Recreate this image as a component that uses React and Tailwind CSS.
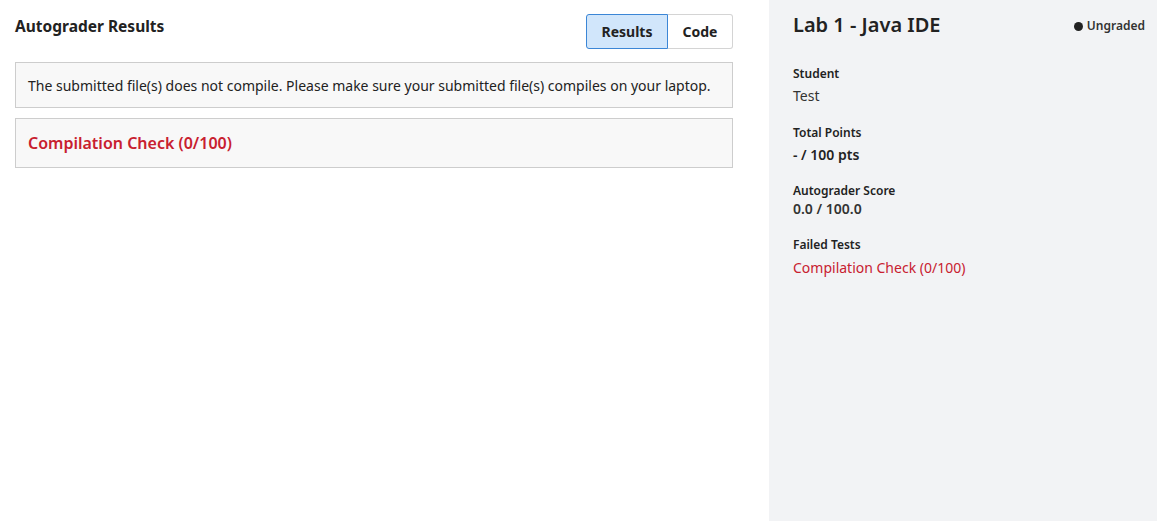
export default function App() {
  const font = { fontFamily: '"Noto Sans", "Open Sans", sans-serif' };
  return (
    <div className="flex h-[521px] w-full bg-white text-[#222]" style={font}>
      <main className="w-[769px] shrink-0 pl-[15px] pr-[36px]">
        <div className="mt-[14px] flex items-start justify-between">
          <h1 className="pt-[2px] text-[15.5px] font-bold leading-[20px] text-[#222]">Autograder Results</h1>
          <div className="flex h-[35px]">
            <button className="h-full w-[82px] rounded-l-[3px] border border-[#3b86d6] bg-[#d1e6fb] text-[14px] font-bold text-[#222]">Results</button>
            <button className="h-full w-[65px] rounded-r-[3px] border border-l-0 border-[#d4d4d4] bg-white text-[14px] font-bold text-[#222]">Code</button>
          </div>
        </div>
        <div className="mt-[13px] flex h-[46px] items-center border border-[#cdcdcd] bg-[#f8f8f8] pl-[12px] text-[14px] text-[#222]">
          The submitted file(s) does not compile. Please make sure your submitted file(s) compiles on your laptop.
        </div>
        <div className="mt-[10px] flex h-[50px] items-center border border-[#cdcdcd] bg-[#f8f8f8] pl-[12px] text-[16px] font-semibold text-[#c8202f]">
          Compilation Check (0/100)
        </div>
      </main>
      <aside className="flex-1 bg-[#f2f3f5] pl-[24px] pr-[12px]">
        <div className="mt-[11px] flex items-center justify-between">
          <h2 className="text-[20px] font-semibold leading-[28px] text-[#222]">Lab 1 - Java IDE</h2>
          <div className="mt-[2px] flex items-center gap-[4px] text-[12px] font-semibold text-[#333]">
            <span className="inline-block h-[9px] w-[9px] rounded-full bg-[#222]"></span>
            Ungraded
          </div>
        </div>
        <div className="mt-[27px] text-[12px] font-semibold leading-[16px] text-[#222]">Student</div>
        <div className="mt-[4px] text-[14px] leading-[20px] text-[#333]">Test</div>
        <div className="mt-[19px] text-[12px] font-semibold leading-[16px] text-[#222]">Total Points</div>
        <div className="mt-[4px] text-[14px] font-semibold leading-[20px] text-[#222]">- / 100 pts</div>
        <div className="mt-[18px] text-[12px] font-semibold leading-[16px] text-[#222]">Autograder Score</div>
        <div className="mt-[0px] text-[14px] font-semibold leading-[20px] text-[#333]">0.0 / 100.0</div>
        <div className="mt-[18px] text-[12px] font-semibold leading-[16px] text-[#222]">Failed Tests</div>
        <div className="mt-[5px] text-[14px] leading-[20px] text-[#c8202f]">Compilation Check (0/100)</div>
      </aside>
    </div>
  );
}
